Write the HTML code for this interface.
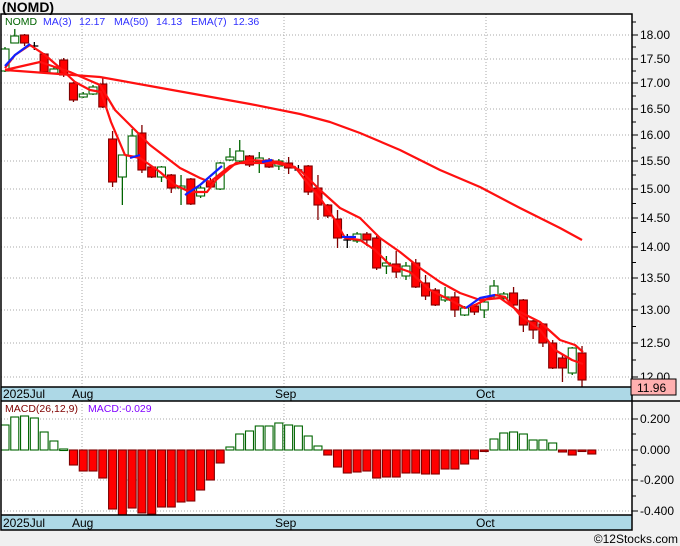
<!DOCTYPE html>
<html><head><meta charset="utf-8">
<style>
body{margin:0;width:680px;height:546px;background:#f0f0f0;overflow:hidden;font-family:"Liberation Sans","DejaVu Sans",sans-serif}
svg{position:absolute;left:0;top:0}
</style></head><body>
<svg id="s" width="680" height="546" xmlns="http://www.w3.org/2000/svg" font-family="Liberation Sans, DejaVu Sans, sans-serif">
<rect x="1" y="14" width="631" height="516" fill="#fff"/>
<g id="grid" stroke="#aaa" stroke-dasharray="1,2" stroke-width="1"></g>
<g id="cand"></g>
<g id="lines" fill="none" stroke-width="2.2" stroke-linejoin="round">
<polyline stroke="#ff1010" points="5,70 100,77 150,86 200,95 250,104 300,114 330,122 360,133 400,150 440,170 480,187 520,208 560,228 582,240"/>
<polyline stroke="#ff1010" points="5,70 40,62 70,72 100,85 115,110 130,125 150,145 180,168 200,178 210,182 230,166 250,160 280,162 300,170 320,190 340,208 360,218 380,238 400,252 420,268 440,282 460,293 480,300 500,298 520,312 540,322 560,340 575,345 583,352"/>
<polyline stroke="#ff1010" points="5,68 15,55 30,45 45,55 60,68 75,82 90,90 101,92 111,122 125,155 140,158 160,172 175,185 190,192 207,192 216,180 236,163 255,163 275,163 295,167 305,180 320,198 335,220 345,238 360,240 375,250 390,265 410,272 430,290 450,300 465,308 475,305 495,295 505,297 520,315 540,330 555,350 572,360 583,364"/>
<g stroke="#1020ff"><polyline points="5,66 15,55 30,44"/><polyline points="130,158 140,155"/><polyline points="185,195 200,185 222,166"/><polyline points="262,162 272,160"/><polyline points="342,237 356,237"/><polyline points="466,308 480,298 495,295"/></g>
</g>
<g id="bars"></g>
<rect x="1" y="387" width="631" height="14" fill="#add8e6"/>
<rect x="1" y="515" width="631" height="15" fill="#add8e6"/>
<g stroke="#000" stroke-width="1.5" fill="none">
<rect x="1" y="14" width="631" height="516"/>
<line x1="1" y1="387" x2="632" y2="387"/><line x1="1" y1="401" x2="680" y2="401"/>
<line x1="1" y1="515" x2="632" y2="515"/>
</g>
<g id="ticks" stroke="#000"></g>
<g font-size="12" fill="#000">
<text x="2" y="12" font-weight="bold" font-size="14">(NOMD)</text>
<text x="3" y="398">2025Jul</text><text x="72" y="398">Aug</text><text x="275" y="398">Sep</text><text x="476" y="398">Oct</text>
<text x="3" y="527">2025Jul</text><text x="72" y="527">Aug</text><text x="275" y="527">Sep</text><text x="476" y="527">Oct</text>
</g>
<g font-size="10.5"><text x="5" y="25" fill="#006400">NOMD</text>
<g fill="#3030ff"><text x="43" y="25">MA(3)</text><text x="79" y="25">12.17</text><text x="114" y="25">MA(50)</text><text x="156" y="25">14.13</text><text x="191" y="25">EMA(7)</text><text x="233" y="25">12.36</text></g>
<text x="5" y="412" fill="#800000">MACD(26,12,9)</text><text x="88" y="412" fill="#8000ff">MACD:-0.029</text></g>
<g id="lab" font-size="12" fill="#000"></g>
<rect x="631" y="379" width="45" height="16" fill="#ffb0b0" stroke="#000"/>
<text x="637" y="392" font-size="12">11.96</text>
<text x="678" y="543" font-size="12" text-anchor="end" fill="#000">©12Stocks.com</text>
</svg>
<script>
var NS="http://www.w3.org/2000/svg";
function el(p,t,a){var e=document.createElementNS(NS,t);for(var k in a)e.setAttribute(k,a[k]);document.getElementById(p).appendChild(e);return e;}
var py=[[18,35],[17.5,59],[17,83],[16.5,109],[16,135],[15.5,161],[15,189],[14.5,218],[14,247],[13.5,278],[13,310],[12.5,343],[12,377]];
py.forEach(function(p){el("grid","line",{x1:1,x2:632,y1:p[1],y2:p[1]});el("ticks","line",{x1:632,x2:638,y1:p[1],y2:p[1]});
var t=el("lab","text",{x:640,y:p[1]+4});t.textContent=p[0].toFixed(2);});
for(var i=0;i<py.length-1;i++){var m=(py[i][1]+py[i+1][1])/2;el("ticks","line",{x1:632,x2:636,y1:m,y2:m});}
el("ticks","line",{x1:632,x2:636,y1:22,y2:22});
[[0.2,419],[0,450],[-0.2,480],[-0.4,511]].forEach(function(p){el("grid","line",{x1:1,x2:632,y1:p[1],y2:p[1]});el("ticks","line",{x1:632,x2:638,y1:p[1],y2:p[1]});
var t=el("lab","text",{x:640,y:p[1]+4});t.textContent=p[0].toFixed(3);});
[434,465,496].forEach(function(y){el("ticks","line",{x1:632,x2:636,y1:y,y2:y});});
[82,284,486].forEach(function(x){el("grid","line",{x1:x,x2:x,y1:14,y2:387});el("grid","line",{x1:x,x2:x,y1:401,y2:515});});
var C=[["g",49,71,47,72],["g",36,43,29,43],["r",35,43,34,46],["k",46,46,42,50],["r",54,72,53,73],["g",69,73,66,74],["r",60,75,58,77],["r",83,100,82,102],["g",94,97,92,98],["g",87,94,85,95],["r",84,107,78,108],
["r",139,182,131,187],["g",155,177,155,205],["g",136,156,129,157],["r",133,170,125,173],["r",167,177,166,178],["g",167,177,166,182],["r",175,188,174,193],["g",186,188,175,205],["r",179,204,178,205],["g",188,196,186,198],["r",181,187,178,188],
["g",163,189,162,190],["g",157,160,148,161],["g",151,161,140,162],["r",156,165,155,167],["g",158,162,152,173],["r",160,167,158,168],["g",161,166,159,170],["r",163,168,157,174],["k",170,170,165,172],
["r",166,192,165,195],["r",188,205,175,220],["r",205,216,204,218],["r",219,238,210,248],["k",240,240,234,248],["g",234,241,232,243],["r",234,240,232,246],["r",238,268,236,270],["g",263,266,256,274],["r",264,272,251,278],["g",266,276,262,280],
["r",263,287,259,288],["r",283,296,275,300],["r",290,305,288,306],["g",297,300,287,302],["r",297,310,292,317],["g",308,315,306,316],["r",306,312,304,315],["g",302,310,300,318],["g",286,296,280,298],["g",294,298,292,300],["r",293,305,287,307],
["r",300,325,299,332],["r",321,330,320,339],["r",324,343,323,347],["r",343,368,340,369],["r",358,368,354,382],["g",348,373,347,375],["r",353,380,346,387]];
C.forEach(function(c,i){var x=5+i*9.78;var col=c[0]=="r"?"#800000":c[0]=="g"?"#006400":"#000";
el("cand","line",{x1:x,x2:x,y1:c[3],y2:c[4],stroke:col,"stroke-width":1.3});
if(c[0]=="k"){el("cand","line",{x1:x-4,x2:x+4,y1:c[1],y2:c[1],stroke:"#000","stroke-width":1.3});}
else el("cand","rect",{x:x-4,y:c[1],width:8,height:Math.max(c[2]-c[1],2),fill:c[0]=="r"?"#ff0000":"#fff",stroke:col,"stroke-width":1.1});});
var B=[425,417,416,418,432,441,449,465,471,471,478,509,515,508,513,514,507,507,502,501,490,480,463,447,434,431,426,426,423,425,426,436,446,455,467,473,472,471,478,477,477,473,473,474,474,469,469,464,459,451,439,433,432,434,440,440,443,452,455,451,454];
B.forEach(function(y,i){var x=5+i*9.78;var pos=y<450;var t=Math.min(y,450),h=Math.max(Math.abs(y-450),1.5);
el("bars","rect",{x:x-4,y:t,width:8,height:h,fill:pos?"#fff":"#ff0000",stroke:pos?"#006400":"#800000","stroke-width":1.1});});
</script>
</body></html>
